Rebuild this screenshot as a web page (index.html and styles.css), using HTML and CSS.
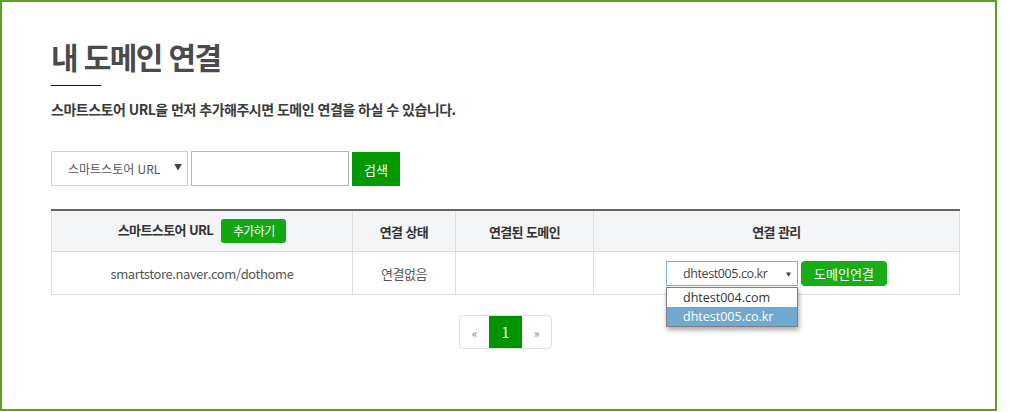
FILE: index.html
```html
<!DOCTYPE html>
<html lang="ko">
<head>
  <meta charset="UTF-8" />
  <title>내 도메인 연결</title>
  <link rel="stylesheet" href="styles.css">
</head>
<body>
  <div class="frame">
    <h1 class="title">내 도메인 연결</h1>
    <div class="title-line"></div>
    <p class="desc">스마트스토어 URL을 먼저 추가해주시면 도메인 연결을 하실 수 있습니다.</p>

    <div class="search">
      <div class="fake-select search-select">
        <span>스마트스토어 URL</span>
        <span class="arrow">▼</span>
      </div>
      <input class="search-input" type="text">
      <button class="btn-search">검색</button>
    </div>

    <table class="list">
      <thead>
        <tr>
          <th class="col-url">스마트스토어 URL <span class="badge">추가하기</span></th>
          <th class="col-state">연결 상태</th>
          <th class="col-domain">연결된 도메인</th>
          <th>연결 관리</th>
        </tr>
      </thead>
      <tbody>
        <tr>
          <td>smartstore.naver.com/dothome</td>
          <td>연결없음</td>
          <td></td>
          <td>
            <div class="manage">
              <div class="domain-wrap">
                <div class="fake-select domain-select">
                  <span>dhtest005.co.kr</span>
                  <span class="arrow">▼</span>
                </div>
                <ul class="dropdown">
                  <li>dhtest004.com</li>
                  <li class="active">dhtest005.co.kr</li>
                </ul>
              </div>
              <button class="btn-connect">도메인연결</button>
            </div>
          </td>
        </tr>
      </tbody>
    </table>

    <div class="paging">
      <a class="page">&laquo;</a>
      <a class="page current">1</a>
      <a class="page">&raquo;</a>
    </div>
  </div>
</body>
</html>
```

FILE: styles.css
```css
body {
  margin: 0;
  font-family: "Noto Sans CJK KR", "Noto Sans", sans-serif;
  color: #444;
  background: #fff;
}

.frame {
  width: 997px;
  height: 411px;
  box-sizing: border-box;
  border: 2px solid #5f9e24;
  padding: 0 0 0 49px;
}

.title {
  margin: 34px 0 0;
  font-size: 30px;
  line-height: 40px;
  font-weight: 700;
  color: #4a4a4a;
  letter-spacing: -1.6px;
}

.title-line {
  width: 50px;
  height: 1px;
  background: #111;
  margin-top: 9px;
}

.desc {
  margin: 11px 0 0;
  font-size: 14px;
  line-height: 24px;
  font-weight: 700;
  color: #3a3a3a;
  letter-spacing: -0.5px;
}

.search {
  display: flex;
  gap: 3px;
  margin-top: 30px;
  height: 35px;
}

.fake-select {
  display: flex;
  align-items: center;
  justify-content: space-between;
  box-sizing: border-box;
  background: #fff;
}

.arrow {
  font-size: 8px;
  color: #444;
}

.search-select {
  width: 137px;
  height: 35px;
  border: 1px solid #d0d0d0;
  padding: 0 5px 0 16px;
  font-size: 12px;
  color: #555;
}

.search-select .arrow {
  margin-top: -4px;
}

.search-input {
  width: 158px;
  height: 35px;
  box-sizing: border-box;
  border: 1px solid #b5b5b5;
  margin: 0;
}

.btn-search {
  width: 48px;
  height: 34px;
  margin-top: 1px;
  border: none;
  background: #009a00;
  color: #fff;
  font-family: inherit;
  font-size: 13px;
}

.list {
  width: 909px;
  margin-top: 23px;
  border-collapse: collapse;
  border-top: 2px solid #666;
  font-size: 13px;
}

.list th,
.list td {
  border: 1px solid #ddd;
  text-align: center;
  padding: 0;
}

.list th {
  height: 40px;
  background: #f4f5f7;
  font-weight: 700;
  color: #333;
  letter-spacing: -0.6px;
}

.list td {
  height: 42px;
  color: #555;
  letter-spacing: -0.4px;
}

.col-url { width: 300px; }
.col-state { width: 102px; }
.col-domain { width: 137px; }

.badge {
  display: inline-block;
  width: 65px;
  height: 24px;
  line-height: 24px;
  margin-left: 5px;
  border-radius: 3px;
  background: #12a812;
  color: #fff;
  font-size: 12px;
  font-weight: 400;
  vertical-align: middle;
}

.manage {
  display: flex;
  justify-content: center;
  gap: 3px;
}

.domain-wrap {
  position: relative;
}

.domain-select {
  width: 132px;
  height: 25px;
  border: 1px solid #7aaee0;
  padding: 0 5px 0 16px;
  font-family: "Open Sans", sans-serif;
  font-size: 12.5px;
  color: #444;
}

.dropdown {
  position: absolute;
  left: 0;
  top: 26px;
  width: 132px;
  margin: 0;
  padding: 0;
  list-style: none;
  background: #fff;
  border: 1px solid #7f7f7f;
  box-sizing: border-box;
  box-shadow: 1px 3px 5px rgba(0, 0, 0, 0.35);
  text-align: left;
  font-family: "Open Sans", sans-serif;
  font-size: 12.5px;
  letter-spacing: 0;
}

.dropdown li {
  height: 19px;
  line-height: 19px;
  padding-left: 16px;
  color: #333;
}

.dropdown li.active {
  background: #6fa9d0;
  color: #fff;
}

.btn-connect {
  width: 86px;
  height: 25px;
  border: none;
  border-radius: 4px;
  background: #16ad16;
  color: #fff;
  font-family: inherit;
  font-size: 13px;
  padding: 0;
}

.paging {
  display: flex;
  margin: 20px 0 0 408px;
  width: 93px;
  height: 34px;
  border: 1px solid #ddd;
  border-radius: 4px;
  box-sizing: border-box;
  overflow: hidden;
}

.page {
  flex: 1;
  display: flex;
  align-items: center;
  justify-content: center;
  font-size: 12px;
  color: #888;
}

.page.current {
  flex: 0 0 33px;
  background: #009400;
  color: #fff;
  font-size: 14px;
}
```
